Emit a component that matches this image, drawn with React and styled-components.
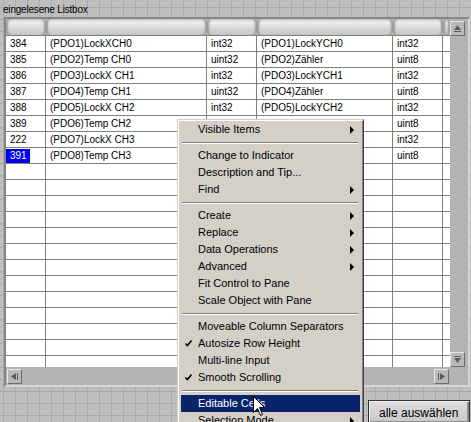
import React from 'react'
import styled, { createGlobalStyle } from 'styled-components'

const GlobalStyle = createGlobalStyle`
  * { box-sizing: border-box; }
  html, body { margin: 0; padding: 0; }
  body { width: 471px; height: 422px; overflow: hidden; background: #bebebe; }
`

const Panel = styled.div`
  position: relative;
  width: 471px;
  height: 422px;
  overflow: hidden;
  display: flex;
  flex-direction: column;
  background-color: #bebebe;
  background-image: linear-gradient(to right, #a9a9a9 1px, transparent 1px),
    linear-gradient(to bottom, #a9a9a9 1px, transparent 1px);
  background-size: 12px 12px;
  background-position: 3px 7px;
  font-family: 'Liberation Sans', Arial, sans-serif;
  color: #000;
`

const Label = styled.div`
  height: 20px;
  padding: 3px 0 0 3px;
  font-size: 10px;
  line-height: 14px;
  letter-spacing: -0.2px;
`

const Frame = styled.div`
  margin-left: 4px;
  width: 466px;
  height: 370px;
  border: 2px solid;
  border-color: #868686 #d6d6d6 #d6d6d6 #868686;
  background: #b3b3b3;
  display: grid;
  grid-template-columns: 444px 18px;
  grid-template-rows: 348px 18px;
`

const Table = styled.div`
  background: #fff;
  overflow: hidden;
  display: flex;
  flex-direction: column;
`

const Header = styled.div`
  display: flex;
  height: 16px;
  flex: none;
  background: #b3b3b3;
`

const HeadCell = styled.div`
  width: ${p => p.$w}px;
  flex: none;
  border-radius: 4px;
  background: linear-gradient(to bottom, #c9c9c9 0%, #ededed 22%, #dadada 55%, #c6c6c6 100%);
  box-shadow: inset 3px 0 2px -1px #9a9a9a, inset -3px 0 2px -1px #9a9a9a;
`

const Row = styled.div`
  display: flex;
  height: 16px;
  flex: none;
  border-top: 1px solid #808080;
`

const Cell = styled.div`
  width: ${p => p.$w}px;
  flex: none;
  padding-left: 4px;
  border-right: ${p => (p.$last ? 'none' : '1px solid #808080')};
  font-size: 10px;
  line-height: 15px;
  white-space: nowrap;
  overflow: hidden;
`

const Selected = styled.span`
  display: inline-block;
  margin-left: -4px;
  padding: 0 3px 0 4px;
  line-height: 14px;
  margin-top: 1px;
  vertical-align: top;
  background: #0000f0;
  color: #fff;
`

const VScroll = styled.div`
  display: flex;
  flex-direction: column;
  justify-content: space-between;
  padding: 2px 0 0 0;
`

const HScroll = styled.div`
  display: flex;
  justify-content: space-between;
  padding: 2px 1px 0 1px;
`

const ScrollButton = styled.div`
  width: 15px;
  height: 15px;
  background: #b9b9b9;
  border: 1px solid;
  border-color: #e4e4e4 #6c6c6c #6c6c6c #e4e4e4;
  display: flex;
  align-items: center;
  justify-content: center;

  svg {
    transform: rotate(${p => p.$rot}deg);
  }
`

const ButtonRow = styled.div`
  display: flex;
  justify-content: flex-end;
  margin-top: 13px;
  padding-right: 1px;
`

const Button = styled.div`
  width: 102px;
  height: 24px;
  padding: 5px 0 0 10px;
  border: 1px solid #2e2e2e;
  background: linear-gradient(to bottom, #dcdcdc, #c8c8c8);
  box-shadow: inset 1px 1px #f2f2f2, inset -2px -2px #8c8c8c;
  font-size: 12px;
  white-space: nowrap;
`

const Menu = styled.div`
  position: absolute;
  left: 177px;
  top: 119px;
  width: 187px;
  padding: 1px 3px 3px 3px;
  background: #d4d0c8;
  border: 1px solid;
  border-color: #d4d0c8 #404040 #404040 #d4d0c8;
  box-shadow: inset 1px 1px #fff, inset -1px -1px #808080;
  font-size: 11px;
`

const Item = styled.div`
  display: grid;
  grid-template-columns: 17px 1fr auto;
  align-items: center;
  height: 17px;
  line-height: 17px;
  padding-right: 6px;
  white-space: nowrap;
  background: ${p => (p.$active ? '#0a246a' : 'transparent')};
  color: ${p => (p.$active ? '#fff' : '#000')};
`

const Check = styled.span`
  display: flex;
  padding-left: 4px;
`

const SubArrow = styled.span`
  width: 0;
  height: 0;
  border-left: 4px solid ${p => (p.$active ? '#fff' : '#000')};
  border-top: 4px solid transparent;
  border-bottom: 4px solid transparent;
`

const Separator = styled.div`
  height: 9px;
  padding: 4px 2px 0 1px;

  &::after {
    content: '';
    display: block;
    border-top: 1px solid #808080;
    border-bottom: 1px solid #fff;
  }
`

const Cursor = styled.svg`
  position: absolute;
  left: 253px;
  top: 396px;
`

const widths = [40, 161, 50, 136, 50, 7]

const rows = [
  ['384', '(PDO1)LockXCH0', 'int32', '(PDO1)LockYCH0', 'int32'],
  ['385', '(PDO2)Temp CH0', 'uint32', '(PDO2)Zähler', 'uint8'],
  ['386', '(PDO3)LockX CH1', 'int32', '(PDO3)LockYCH1', 'int32'],
  ['387', '(PDO4)Temp CH1', 'uint32', '(PDO4)Zähler', 'uint8'],
  ['388', '(PDO5)LockX CH2', 'int32', '(PDO5)LockYCH2', 'int32'],
  ['389', '(PDO6)Temp CH2', 'uint32', '(PDO6)Zähler', 'uint8'],
  ['222', '(PDO7)LockX CH3', 'int32', '(PDO7)LockYCH3', 'int32'],
  ['391', '(PDO8)Temp CH3', 'uint32', '(PDO8)Zähler', 'uint8']
]

const menu = [
  { label: 'Visible Items', sub: true },
  'sep',
  { label: 'Change to Indicator' },
  { label: 'Description and Tip...' },
  { label: 'Find', sub: true },
  'sep',
  { label: 'Create', sub: true },
  { label: 'Replace', sub: true },
  { label: 'Data Operations', sub: true },
  { label: 'Advanced', sub: true },
  { label: 'Fit Control to Pane' },
  { label: 'Scale Object with Pane' },
  'sep',
  { label: 'Moveable Column Separators' },
  { label: 'Autosize Row Height', check: true },
  { label: 'Multi-line Input' },
  { label: 'Smooth Scrolling', check: true },
  'sep',
  { label: 'Editable Cells', active: true },
  { label: 'Selection Mode', sub: true }
]

// small LabVIEW scroll arrow: triangle with a bar, pointing up by default
const Arrow = () => (
  <svg width="9" height="9" viewBox="0 0 9 9">
    <polygon points="4.5,1 8,6 1,6" fill="#5c5c5c" />
    <rect x="1" y="7" width="7" height="1" fill="#5c5c5c" />
  </svg>
)

const CheckMark = () => (
  <svg width="7" height="7" viewBox="0 0 7 7">
    <path d="M0.5 3.5 L2.5 5.5 L6.5 0.5" fill="none" stroke="#000" strokeWidth="1.6" />
  </svg>
)

export default function App() {
  const blank = Array.from({ length: 13 }, () => ['', '', '', '', ''])
  return (
    <Panel>
      <GlobalStyle />
      <Label>eingelesene Listbox</Label>
      <Frame>
        <Table>
          <Header>
            {widths.map((w, i) => <HeadCell key={i} $w={w} />)}
          </Header>
          {[...rows, ...blank].map((r, i) => (
            <Row key={i}>
              {widths.map((w, j) => (
                <Cell key={j} $w={w} $last={j === widths.length - 1}>
                  {i === 7 && j === 0 ? <Selected>{r[j]}</Selected> : r[j]}
                </Cell>
              ))}
            </Row>
          ))}
        </Table>
        <VScroll>
          <ScrollButton $rot={0}><Arrow /></ScrollButton>
          <ScrollButton $rot={180}><Arrow /></ScrollButton>
        </VScroll>
        <HScroll>
          <ScrollButton $rot={-90}><Arrow /></ScrollButton>
          <ScrollButton $rot={90}><Arrow /></ScrollButton>
        </HScroll>
        <div />
      </Frame>
      <ButtonRow>
        <Button>alle auswählen</Button>
      </ButtonRow>
      <Menu>
        {menu.map((m, i) =>
          m === 'sep' ? (
            <Separator key={i} />
          ) : (
            <Item key={i} $active={m.active}>
              <Check>{m.check && <CheckMark />}</Check>
              <span>{m.label}</span>
              {m.sub ? <SubArrow $active={m.active} /> : <span />}
            </Item>
          )
        )}
      </Menu>
      <Cursor width="12" height="20" viewBox="0 0 12 20">
        <path d="M0.5 0.5 L0.5 16.5 L4.5 12.5 L7.5 19.5 L9.5 18.5 L6.5 11.5 L11.5 11.5 Z" fill="#fff" stroke="#000" strokeWidth="1" />
      </Cursor>
    </Panel>
  )
}
